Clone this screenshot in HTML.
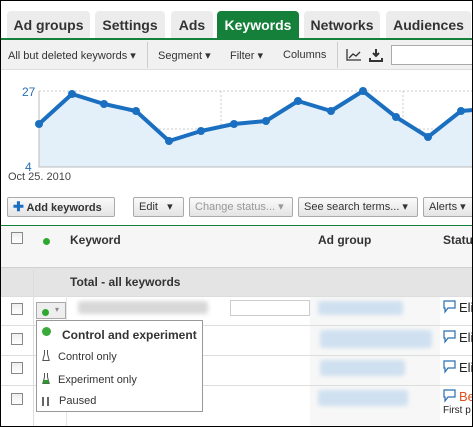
<!DOCTYPE html><html><head><style>
*{margin:0;padding:0;box-sizing:border-box}
body{width:473px;height:427px;overflow:hidden;background:#fff;font-family:"Liberation Sans",Arial,sans-serif;position:relative;color:#222}
.a{position:absolute}
.tab{position:absolute;top:11px;height:27px;background:#ececec;border-radius:4px 4px 0 0;font-weight:bold;font-size:14px;color:#333;text-align:center;line-height:28px}
.tb{font-size:11px;color:#333;position:absolute;top:49px}
.btn{position:absolute;top:197px;height:20px;border:1px solid #aaa;border-radius:2px;background:linear-gradient(#fafafa,#e4e4e4);font-size:11px;line-height:18px;color:#333;padding:0 5px;white-space:nowrap}
.cb{position:absolute;left:11px;width:12px;height:12px;border:1px solid #888;background:linear-gradient(#eee,#fff)}
.blur{position:absolute;background:#cfe0f0;filter:blur(2px);border-radius:3px}
.row{position:absolute;left:0;width:473px;border-top:1px solid #ddd}
.bub{position:absolute;left:443px}
</style></head><body>
<div class="tab" style="left:7px;width:83px">Ad groups</div>
<div class="tab" style="left:95px;width:70px">Settings</div>
<div class="tab" style="left:171px;width:42px">Ads</div>
<div class="tab" style="left:217px;width:82px;background:#15803a;color:#fff">Keywords</div>
<div class="tab" style="left:304px;width:76px">Networks</div>
<div class="tab" style="left:386px;width:85px">Audiences</div>
<div class="a" style="left:0;top:38px;width:473px;height:2px;background:#15803a"></div>
<div class="a" style="left:0;top:40px;width:473px;height:30px;background:#f1f1f1;border-bottom:1px solid #ddd"></div>
<div class="tb" style="left:8px">All but deleted keywords ▾</div>
<div class="a" style="left:147px;top:42px;width:1px;height:26px;background:#ccc"></div>
<div class="tb" style="left:158px">Segment ▾</div>
<div class="tb" style="left:230px">Filter ▾</div>
<div class="tb" style="left:283px">Columns</div>
<div class="a" style="left:337px;top:42px;width:1px;height:26px;background:#ccc"></div>
<svg class="a" style="left:346px;top:47px" width="40" height="16"><path d="M1 2V13H15M3 11L7 7L10 9L14 5" stroke="#333" fill="none" stroke-width="1.3"/><path d="M30 2V9M27 6L30 9L33 6M24 11V14H36V11" stroke="#333" fill="none" stroke-width="2"/></svg>
<div class="a" style="left:391px;top:45px;width:84px;height:20px;border:1px solid #aaa;background:#fff"></div>
<svg class="a" style="left:0;top:70px" width="473" height="110">
<path d="M39 21H473M39 59H473" stroke="#ccc" stroke-dasharray="2 2"/>
<path d="M221 21V97M403 21V97" stroke="#ccc" stroke-dasharray="2 2"/>
<path d="M39 54L72 24L104 34L136 41L169 71L201 61L234 54L266 51L298 31L331 41L363 21L396 47L428 67L461 41L473 40V97H39Z" fill="#e3eff9"/>
<path d="M39 21V97H473" stroke="#bbb" fill="none"/>
<path d="M39 54L72 24L104 34L136 41L169 71L201 61L234 54L266 51L298 31L331 41L363 21L396 47L428 67L461 41L473 40" stroke="#1a6fc0" stroke-width="4" fill="none" stroke-linejoin="round"/>
<g fill="#1a6fc0"><circle cx="39" cy="54" r="4"/><circle cx="72" cy="24" r="4"/><circle cx="104" cy="34" r="4"/><circle cx="136" cy="41" r="4"/><circle cx="169" cy="71" r="4"/><circle cx="201" cy="61" r="4"/><circle cx="234" cy="54" r="4"/><circle cx="266" cy="51" r="4"/><circle cx="298" cy="31" r="4"/><circle cx="331" cy="41" r="4"/><circle cx="363" cy="21" r="4"/><circle cx="396" cy="47" r="4"/><circle cx="428" cy="67" r="4"/><circle cx="461" cy="41" r="4"/></g>
<text x="22" y="26" font-size="12" fill="#2a6fb0" font-family="Liberation Sans">27</text>
<text x="25" y="101" font-size="12" fill="#2a6fb0" font-family="Liberation Sans">4</text>
<text x="8" y="110" font-size="11" fill="#444" font-family="Liberation Sans">Oct 25, 2010</text>
</svg>
<div class="btn" style="left:7px;width:108px;font-weight:bold"><span style="color:#1a6fc0;font-size:13px">✚</span> Add keywords</div>
<div class="btn" style="left:133px;width:51px">Edit &nbsp;&nbsp;▾</div>
<div class="btn" style="left:189px;width:104px;color:#999">Change status... ▾</div>
<div class="btn" style="left:298px;width:120px">See search terms... ▾</div>
<div class="btn" style="left:423px;width:60px">Alerts ▾</div>
<div class="a" style="left:0;top:225px;width:473px;height:1px;background:#15803a"></div>
<div class="a" style="left:0;top:226px;width:473px;height:41px;background:#f6f6f6"></div>
<div class="cb" style="top:232px"></div>
<div class="a" style="left:43px;top:238px;width:7px;height:7px;border-radius:50%;background:#2fa82f"></div>
<div class="a" style="left:70px;top:233px;font-size:12px;font-weight:bold;color:#333">Keyword</div>
<div class="a" style="left:318px;top:233px;font-size:12px;font-weight:bold;color:#333">Ad group</div>
<div class="a" style="left:443px;top:233px;font-size:12px;font-weight:bold;color:#333">Status</div>
<div class="a" style="left:0;top:267px;width:473px;height:29px;background:#e4e4e4;border-top:1px solid #d0d0d0"></div>
<div class="a" style="left:70px;top:275px;font-size:12px;font-weight:bold;color:#333">Total - all keywords</div>
<div class="a" style="left:310px;top:296px;width:130px;height:131px;background:#f7f7f7"></div>
<div class="row" style="top:296px"></div><div class="row" style="top:325px"></div><div class="row" style="top:355px"></div><div class="row" style="top:385px"></div>
<div class="a" style="left:33px;top:267px;width:1px;height:160px;background:#ddd"></div>
<div class="a" style="left:66px;top:296px;width:1px;height:131px;background:#e6e6e6"></div>
<div class="cb" style="top:303px"></div><div class="cb" style="top:333px"></div><div class="cb" style="top:362px"></div><div class="cb" style="top:393px"></div>
<div class="blur" style="left:78px;top:301px;width:130px;height:13px;background:#d8d8d8"></div>
<div class="a" style="left:230px;top:300px;width:80px;height:16px;border:1px solid #ccc;background:#fff"></div>
<div class="blur" style="left:318px;top:301px;width:85px;height:14px"></div>
<div class="blur" style="left:320px;top:330px;width:112px;height:18px"></div>
<div class="blur" style="left:320px;top:360px;width:85px;height:16px"></div>
<div class="blur" style="left:318px;top:390px;width:90px;height:16px"></div>
<svg class="bub" style="top:300px" width="14" height="14"><path d="M1 1H12V8H5L2 12V8H1Z" stroke="#2a6fb0" stroke-width="1.2" fill="#fff"/></svg>
<svg class="bub" style="top:330px" width="14" height="14"><path d="M1 1H12V8H5L2 12V8H1Z" stroke="#2a6fb0" stroke-width="1.2" fill="#fff"/></svg>
<svg class="bub" style="top:360px" width="14" height="14"><path d="M1 1H12V8H5L2 12V8H1Z" stroke="#2a6fb0" stroke-width="1.2" fill="#fff"/></svg>
<svg class="bub" style="top:389px" width="14" height="14"><path d="M1 1H12V8H5L2 12V8H1Z" stroke="#2a6fb0" stroke-width="1.2" fill="#fff"/></svg>
<div class="a" style="left:459px;top:300px;font-size:13px">Eli</div>
<div class="a" style="left:459px;top:330px;font-size:13px">Eli</div>
<div class="a" style="left:459px;top:360px;font-size:13px">Eli</div>
<div class="a" style="left:459px;top:389px;font-size:13px;color:#e05020">Be</div>
<div class="a" style="left:443px;top:405px;font-size:10px">First p</div>
<div class="a" style="left:36px;top:302px;width:30px;height:17px;border:1px solid #aaa;background:#eee"></div>
<div class="a" style="left:42px;top:309px;width:7px;height:7px;border-radius:50%;background:#2fa82f"></div>
<div class="a" style="left:55px;top:305px;font-size:8px;color:#888">▾</div>
<div class="a" style="left:185px;top:334px;font-size:12px">s</div>
<div class="a" style="left:36px;top:320px;width:167px;height:92px;border:1px solid #999;background:#fff"></div>
<div class="a" style="left:42px;top:327px;width:9px;height:9px;border-radius:50%;background:#3aaa3a"></div>
<div class="a" style="left:62px;top:328px;font-size:12px;font-weight:bold;color:#333">Control and experiment</div>
<svg class="a" style="left:42px;top:349px" width="8" height="13"><path d="M2.5 1V5L0.8 11.5H7.2L5.5 5V1" stroke="#555" fill="none"/></svg>
<div class="a" style="left:58px;top:351px;font-size:11px;color:#333">Control only</div>
<svg class="a" style="left:42px;top:372px" width="8" height="13"><path d="M2.5 1V5L0.8 11.5H7.2L5.5 5V1" stroke="#555" fill="none"/><path d="M1.5 8H6.5L7 11.5H1Z" fill="#2a9a2a"/></svg>
<div class="a" style="left:58px;top:374px;font-size:11px;color:#333">Experiment only</div>
<div class="a" style="left:42px;top:397px;width:2px;height:9px;background:#666"></div>
<div class="a" style="left:47px;top:397px;width:2px;height:9px;background:#666"></div>
<div class="a" style="left:59px;top:395px;font-size:11px;color:#333">Paused</div>
<div class="a" style="left:0;top:0;width:473px;height:427px;border:1px solid #000"></div>
</body></html>
